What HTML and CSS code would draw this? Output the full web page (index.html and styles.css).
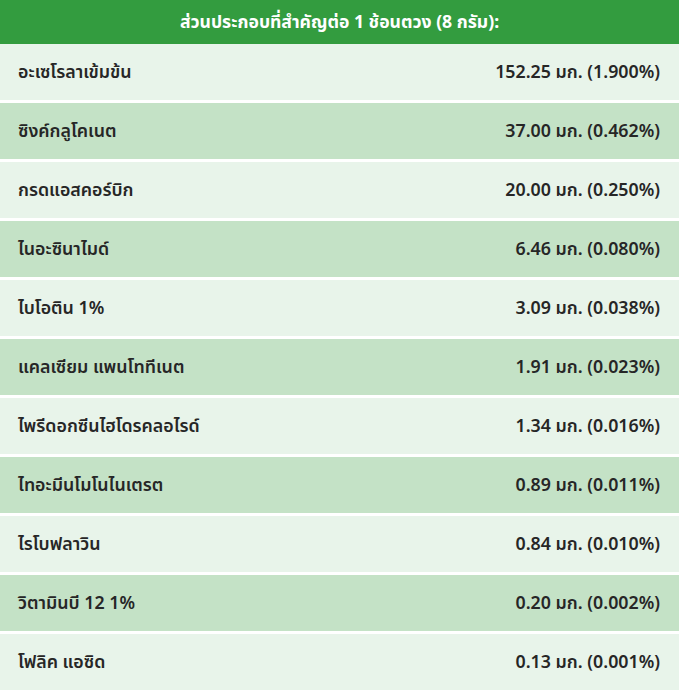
FILE: index.html
```html
<!DOCTYPE html>
<html lang="th">
<head>
<meta charset="utf-8">
<link rel="stylesheet" href="styles.css">
</head>
<body>
<table class="tbl">
  <thead>
    <tr><th colspan="2">ส่วนประกอบที่สำคัญต่อ 1 ช้อนตวง (8 กรัม):</th></tr>
  </thead>
  <tbody>
    <tr class="odd"><td>อะเซโรลาเข้มข้น</td><td class="amt">152.25 มก. (1.900%)</td></tr>
    <tr class="even"><td>ซิงค์กลูโคเนต</td><td class="amt">37.00 มก. (0.462%)</td></tr>
    <tr class="odd"><td>กรดแอสคอร์บิก</td><td class="amt">20.00 มก. (0.250%)</td></tr>
    <tr class="even"><td>ไนอะซินาไมด์</td><td class="amt">6.46 มก. (0.080%)</td></tr>
    <tr class="odd"><td>ไบโอติน 1%</td><td class="amt">3.09 มก. (0.038%)</td></tr>
    <tr class="even"><td>แคลเซียม แพนโททีเนต</td><td class="amt">1.91 มก. (0.023%)</td></tr>
    <tr class="odd"><td>ไพรีดอกซีนไฮโดรคลอไรด์</td><td class="amt">1.34 มก. (0.016%)</td></tr>
    <tr class="even"><td>ไทอะมีนโมโนไนเตรต</td><td class="amt">0.89 มก. (0.011%)</td></tr>
    <tr class="odd"><td>ไรโบฟลาวิน</td><td class="amt">0.84 มก. (0.010%)</td></tr>
    <tr class="even"><td>วิตามินบี 12 1%</td><td class="amt">0.20 มก. (0.002%)</td></tr>
    <tr class="odd"><td>โฟลิค แอซิด</td><td class="amt">0.13 มก. (0.001%)</td></tr>
  </tbody>
</table>
</body>
</html>
```
FILE: styles.css
```css
html, body {
  margin: 0;
  padding: 0;
  background: #ffffff;
}
body {
  font-family: "Noto Sans", "Noto Sans Thai", "DejaVu Sans", sans-serif;
  color: #262626;
}
.tbl {
  width: 679px;
  border-collapse: collapse;
}
.tbl th {
  background: #339c3f;
  color: #ffffff;
  font-size: 17.6px;
  font-weight: 700;
  height: 44px;
  padding: 0;
  text-align: center;
  vertical-align: middle;
}
.tbl td {
  height: 56px;
  padding: 0 19px 0 18px;
  font-size: 17.8px;
  font-weight: 600;
  vertical-align: middle;
  border-top: 3px solid #ffffff;
}
.tbl tbody tr:first-child td {
  border-top: none;
}
.tbl td.amt {
  text-align: right;
}
.odd td {
  background: #e8f4ea;
}
.even td {
  background: #c4e2c6;
}
```
